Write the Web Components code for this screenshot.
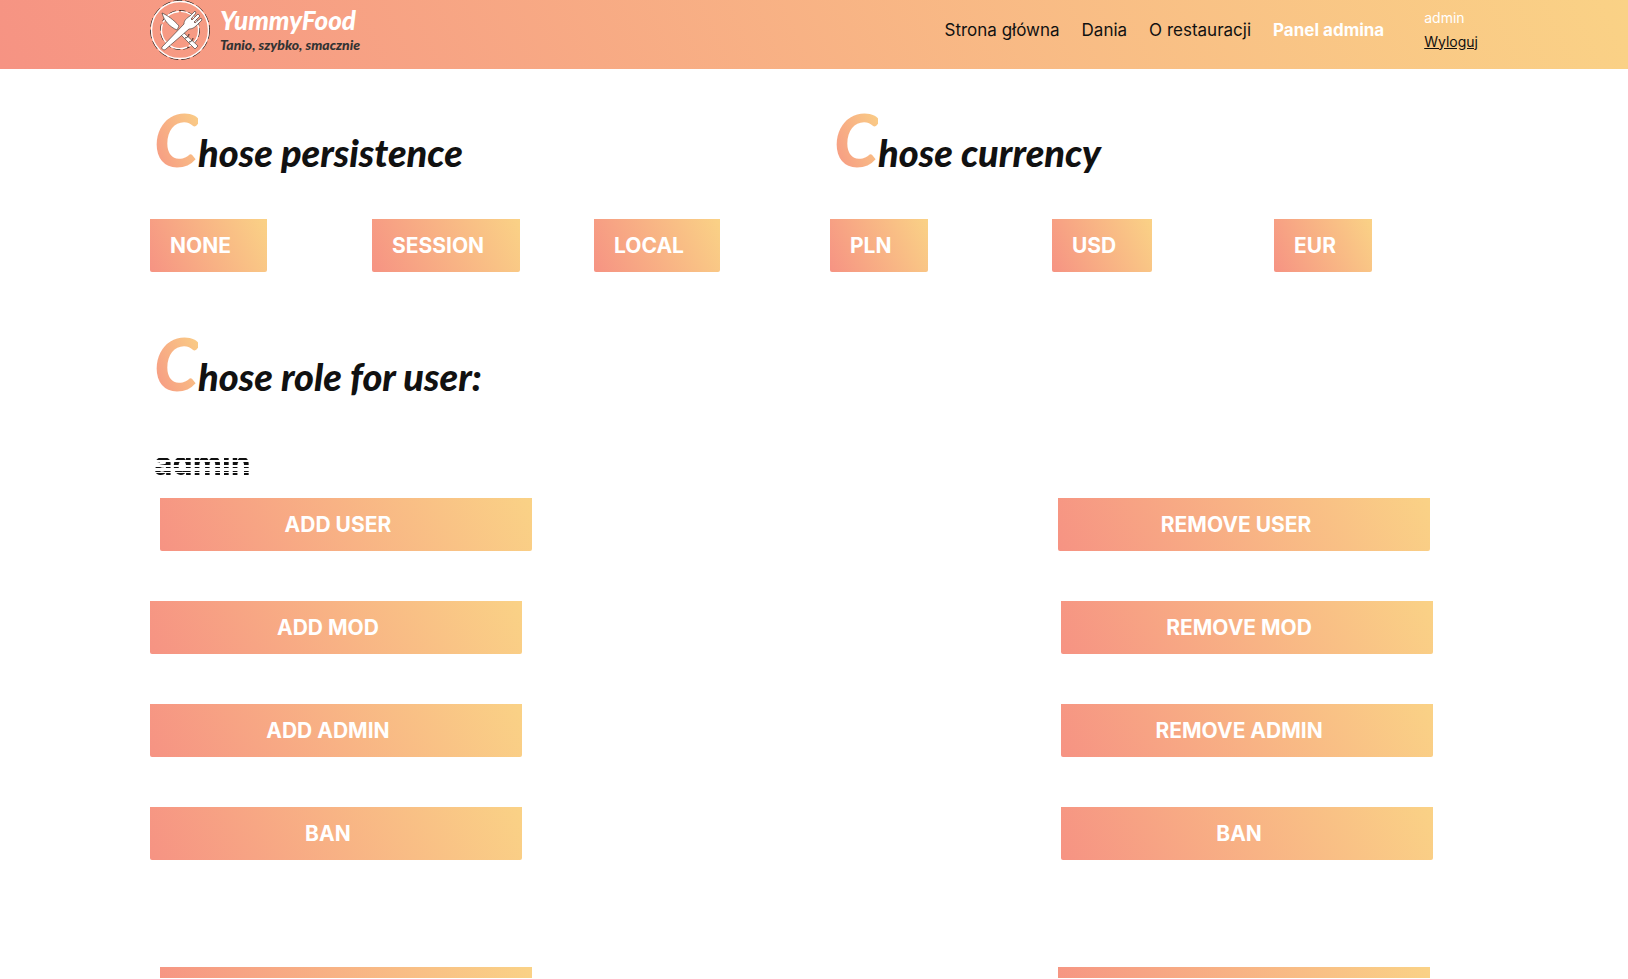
<!DOCTYPE html>
<html lang="pl">
<head>
<meta charset="utf-8">
<meta name="viewport" content="width=device-width, initial-scale=1">
<title>YummyFood – Panel admina</title>
<style>
  body {
    --warm: linear-gradient(65deg, #f69383, #fad286);
    --gutter: 150px;
    margin: 0;
    background: #fff;
    color: #111;
    font-family: Inter, "Liberation Sans", sans-serif;
  }
</style>
</head>
<body>
<admin-page></admin-page>

<script>
const define = (name, html) => {
  const template = document.createElement('template');
  template.innerHTML = html;
  customElements.define(name, class extends HTMLElement {
    constructor() {
      super();
      this.attachShadow({ mode: 'open' }).append(template.content.cloneNode(true));
    }
  });
};

define('food-logo', `
  <style>
    :host { display: block; }
    a { display: flex; gap: 10px; color: inherit; text-decoration: none; font-family: Lato, sans-serif; font-style: italic; font-weight: 900; }
    svg { display: block; width: 60px; height: 58px; overflow: visible; }
    .words { display: flex; flex-direction: column; padding-top: 4px; }
    .name { color: #fff; font-size: 26px; line-height: 30px; }
    .tag { color: #333; font-size: 14px; line-height: 20px; }
  </style>
  <a href="#">
    <svg viewBox="0 0 60 58" aria-hidden="true" fill="none">
      <g stroke="#332b28">
        <circle cx="30" cy="29" r="29.5" stroke-dasharray="9 3"/>
        <circle cx="30" cy="29" r="19.5" stroke-dasharray="7 3"/>
      </g>
      <g stroke="#fff" stroke-width="1.4">
        <circle cx="30" cy="29" r="28.5"/>
        <circle cx="30" cy="29" r="18.6" stroke-dasharray="20 2"/>
      </g>
      <g fill="#fff" stroke="#332b28" stroke-width=".6">
        <path d="M12 12c5 2 12 7 17 13l-2 4c-7-3-13-9-15-17z"/>
        <path d="M33 31l15 14-3 3-14-14z"/>
        <path d="M12 46l22-23c0-4 3-6 6-8l5-5 1 2-5 6 1 1 6-6 2 2-6 6 1 1 6-5 1 2-5 5c-3 3-5 4-8 4L16 48c-2 2-5 0-4-2z"/>
      </g>
      <path d="M35 37c2 0 4-2 4-4M39 41c2 0 4-2 4-4" stroke="#332b28"/>
    </svg>
    <span class="words"><span class="name">YummyFood</span><span class="tag">Tanio, szybko, smacznie</span></span>
  </a>`);

define('site-header', `
  <style>
    :host { display: block; background: var(--warm); }
    header { display: flex; align-items: center; justify-content: space-between; height: 59px; padding: 0 var(--gutter) 10px; }
    .right { display: flex; align-items: center; gap: 40px; }
    nav { display: flex; gap: 22px; font-size: 17px; line-height: 24px; }
    nav a { color: #111; text-decoration: none; }
    nav a[aria-current] { color: #fff; font-weight: 700; }
    .user { display: flex; flex-direction: column; font-size: 14px; line-height: 24px; color: #fff; }
    .user a { color: #111; }
  </style>
  <header>
    <food-logo></food-logo>
    <div class="right">
      <nav>
        <a href="#">Strona główna</a><a href="#">Dania</a><a href="#">O restauracji</a><a href="#" aria-current="page">Panel admina</a>
      </nav>
      <div class="user"><span>admin</span><a href="#">Wyloguj</a></div>
    </div>
  </header>`);

define('section-title', `
  <style>
    :host { display: block; }
    h2 { margin: 0; padding-left: 4px; font: italic 900 38px/84px Lato, sans-serif; color: #111; }
    span { display: inline-block; width: 44px; font-size: 72px; background: var(--warm); background-clip: text; color: transparent; }
  </style>
  <h2><span>C</span><slot></slot></h2>`);

define('warm-button', `
  <style>
    :host { display: block; }
    button {
      box-sizing: border-box; width: 100%; height: 53px; padding: 0 36px 0 20px; border: 0;
      border-radius: 0 0 2px 2px; background: var(--warm); color: #fff;
      font: 700 21px/24px Inter, "Liberation Sans", sans-serif; cursor: pointer;
    }
  </style>
  <button type="button"><slot></slot></button>`);

define('option-group', `
  <style>
    :host { display: block; }
    .options { display: grid; grid-template-columns: repeat(3, 1fr); column-gap: 18px; justify-items: start; margin-top: 25px; }
  </style>
  <section>
    <section-title><slot name="title"></slot></section-title>
    <div class="options"><slot></slot></div>
  </section>`);

define('user-name', `
  <style>
    :host { display: block; }
    /* the name shows through a set of thin horizontal bars */
    h3 {
      margin: 0; padding-left: 4px; font-size: 32px; line-height: 40px; font-weight: 700;
      mask-image: linear-gradient(transparent 14px, #000 14px 16px, transparent 16px 18px, #000 18px 21px, transparent 21px 23px, #000 23px 24px, transparent 24px 27px, #000 27px 28px, transparent 28px 29px, #000 29px 31px, transparent 31px);
    }
  </style>
  <h3><slot></slot></h3>`);

define('button-pair', `
  <style>
    :host { display: block; container-type: inline-size; }
    div { display: flex; justify-content: space-between; padding-right: 45px; }
    :host([lead]) div { padding: 0 48px 0 10px; }
    ::slotted(warm-button) { width: 28cqw; }
  </style>
  <div><slot></slot></div>`);

define('role-actions', `
  <style>
    :host { display: grid; row-gap: 50px; }
  </style>
  <button-pair lead><warm-button>ADD USER</warm-button><warm-button>REMOVE USER</warm-button></button-pair>
  <button-pair><warm-button>ADD MOD</warm-button><warm-button>REMOVE MOD</warm-button></button-pair>
  <button-pair><warm-button>ADD ADMIN</warm-button><warm-button>REMOVE ADMIN</warm-button></button-pair>
  <button-pair><warm-button>BAN</warm-button><warm-button>BAN</warm-button></button-pair>`);

define('admin-page', `
  <style>
    :host { display: block; }
    main { padding: 28px var(--gutter) 0; }
    .settings { display: grid; grid-template-columns: 1fr 1fr; column-gap: 32px; }
    .roles { margin-top: 49px; }
    user-name { margin: 26px 0 14px; }
    .next { height: 11px; margin-top: 107px; overflow: hidden; }
  </style>
  <site-header></site-header>
  <main>
    <div class="settings">
      <option-group>
        <span slot="title">hose persistence</span>
        <warm-button>NONE</warm-button><warm-button>SESSION</warm-button><warm-button>LOCAL</warm-button>
      </option-group>
      <option-group>
        <span slot="title">hose currency</span>
        <warm-button>PLN</warm-button><warm-button>USD</warm-button><warm-button>EUR</warm-button>
      </option-group>
    </div>
    <section class="roles">
      <section-title>hose role for user:</section-title>
      <user-name>admin</user-name>
      <role-actions></role-actions>
      <div class="next"><button-pair lead><warm-button></warm-button><warm-button></warm-button></button-pair></div>
    </section>
  </main>`);
</script>
</body>
</html>
